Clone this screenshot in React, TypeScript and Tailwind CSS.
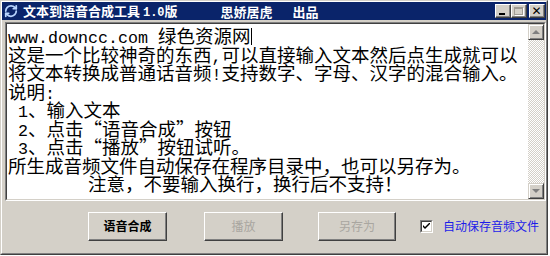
import { RefreshCw } from 'lucide-react';

const cjk = '"Noto Sans CJK SC", "Noto Sans", sans-serif';

function L({ children }: { children: React.ReactNode }) {
  return <span className="font-['Liberation_Mono',monospace] text-[16.67px] leading-none whitespace-pre">{children}</span>;
}

function Line({ children, className = '' }: { children: React.ReactNode; className?: string }) {
  return <div className={`h-[18.5px] leading-[18.5px] whitespace-nowrap ${className}`}>{children}</div>;
}

function CaptionButton({ children }: { children: React.ReactNode }) {
  return (
    <div className="w-[16px] h-[14px] bg-[#d4d0c8] border border-t-white border-l-white border-r-[#404040] border-b-[#404040] shadow-[inset_-1px_-1px_#808080] flex items-center justify-center">
      {children}
    </div>
  );
}

function PushButton({ label, disabled, width }: { label: string; disabled?: boolean; width: string }) {
  return (
    <div className={`${width} h-[29px] bg-[#d4d0c8] border border-t-white border-l-white border-r-[#404040] border-b-[#404040] shadow-[inset_-1px_-1px_#808080] flex items-center justify-center`}>
      <span className={disabled ? 'text-[12px] leading-none text-[#a9a6a0]' : 'text-[12px] leading-none font-bold text-black'}>{label}</span>
    </div>
  );
}

export default function App() {
  return (
    <div className="w-[550px] h-[256px] bg-white" style={{ fontFamily: cjk }}>
      <div className="w-[548px] h-[255px] bg-[#d4d0c8] border border-t-[#d4d0c8] border-l-[#d4d0c8] border-r-[#404040] border-b-[#404040]">
        <div className="w-full h-full border border-t-white border-l-white border-r-[#808080] border-b-[#808080] flex flex-col">
          {/* title bar */}
          <div className="h-[18px] bg-[#0a246a] flex items-center pl-[2px] pr-[1px] text-white font-bold text-[13px] leading-none">
            <RefreshCw size={14} strokeWidth={3} className="text-[#b8d4ff]" />
            <span className="ml-[5px]">文本到语音合成工具 <span className="font-['Liberation_Mono',monospace] text-[12px]">1.0</span>版</span>
            <span className="ml-[43px]">思娇居虎</span>
            <span className="ml-[20px]">出品</span>
            <div className="ml-auto flex items-center">
              <CaptionButton>
                <div className="w-[6px] h-[2px] bg-black mt-[6px] -ml-[2px]" />
              </CaptionButton>
              <CaptionButton>
                <div className="w-[9px] h-[8px] border border-t-2 border-[#a09c94] shadow-[1px_1px_#fff] -ml-[1px]" />
              </CaptionButton>
              <div className="w-[2px]" />
              <CaptionButton>
                <span className="text-black text-[12px] font-['DejaVu_Sans',sans-serif] font-bold leading-none -ml-[1px]">✕</span>
              </CaptionButton>
            </div>
          </div>

          {/* text area */}
          <div className="mt-[2px] ml-[3px] w-[541px] h-[179px] border border-t-[#808080] border-l-[#808080] border-r-white border-b-white">
            <div className="w-full h-full border border-t-[#404040] border-l-[#404040] border-r-[#d4d0c8] border-b-[#d4d0c8] bg-white flex">
              <div className="flex-1 pt-[2px] pl-[1px] text-black text-[18.5px] leading-[18.5px] overflow-hidden">
                <Line>
                  <L>www.downcc.com </L>绿色资源网
                  <span className="inline-block w-px h-[17px] bg-black ml-[1px] align-[-2px]" />
                </Line>
                <Line>这是一个比较神奇的东西<L>,</L>可以直接输入文本然后点生成就可以</Line>
                <Line>将文本转换成普通话音频<L>!</L>支持数字、字母、汉字的混合输入。</Line>
                <Line>说明<L>:</L></Line>
                <Line><L> 1</L>、输入文本</Line>
                <Line><L> 2</L>、点击“语音合成”按钮</Line>
                <Line><L> 3</L>、点击“播放”按钮试听。</Line>
                <Line>所生成音频文件自动保存在程序目录中，也可以另存为。</Line>
                <Line className="pl-[80px]">注意，不要输入换行，换行后不支持！</Line>
              </div>
              {/* scrollbar */}
              <div className="w-[16px] h-full flex flex-col">
                <div className="w-[16px] h-[16px] bg-[#d4d0c8] border border-t-[#d4d0c8] border-l-[#d4d0c8] border-r-[#404040] border-b-[#404040] shadow-[inset_1px_1px_#fff,inset_-1px_-1px_#808080] flex items-center justify-center">
                  <div className="w-0 h-0 border-l-[4px] border-r-[4px] border-b-[4px] border-l-transparent border-r-transparent border-b-[#808080]" />
                </div>
                <div className="flex-1 bg-[repeating-conic-gradient(#d4d0c8_0_25%,#ffffff_0_50%)] bg-[length:2px_2px]" />
                <div className="w-[16px] h-[16px] bg-[#d4d0c8] border border-t-[#d4d0c8] border-l-[#d4d0c8] border-r-[#404040] border-b-[#404040] shadow-[inset_1px_1px_#fff,inset_-1px_-1px_#808080] flex items-center justify-center">
                  <div className="w-0 h-0 border-l-[4px] border-r-[4px] border-t-[4px] border-l-transparent border-r-transparent border-t-[#808080]" />
                </div>
              </div>
            </div>
          </div>

          {/* bottom controls */}
          <div className="flex-1 flex items-center pl-[86px] pb-[2px]">
            <PushButton label="语音合成" width="w-[79px]" />
            <div className="w-[37px]" />
            <PushButton label="播放" disabled width="w-[79px]" />
            <div className="w-[35px]" />
            <PushButton label="另存为" disabled width="w-[78px]" />
            <div className="w-[24px]" />
            <div className="w-[13px] h-[13px] border border-t-[#808080] border-l-[#808080] border-r-white border-b-white">
              <div className="w-full h-full border border-t-[#404040] border-l-[#404040] border-r-[#d4d0c8] border-b-[#d4d0c8] bg-white flex items-center justify-center">
                <svg width="7" height="7" viewBox="0 0 7 7">
                  <path d="M0 2 L0 4 L2 6 L7 1 L7 -1 L2 4 Z" fill="#000" />
                </svg>
              </div>
            </div>
            <span className="ml-[10px] text-[12px] text-[#1c1ce8] leading-none">自动保存音频文件</span>
          </div>
        </div>
      </div>
    </div>
  );
}
